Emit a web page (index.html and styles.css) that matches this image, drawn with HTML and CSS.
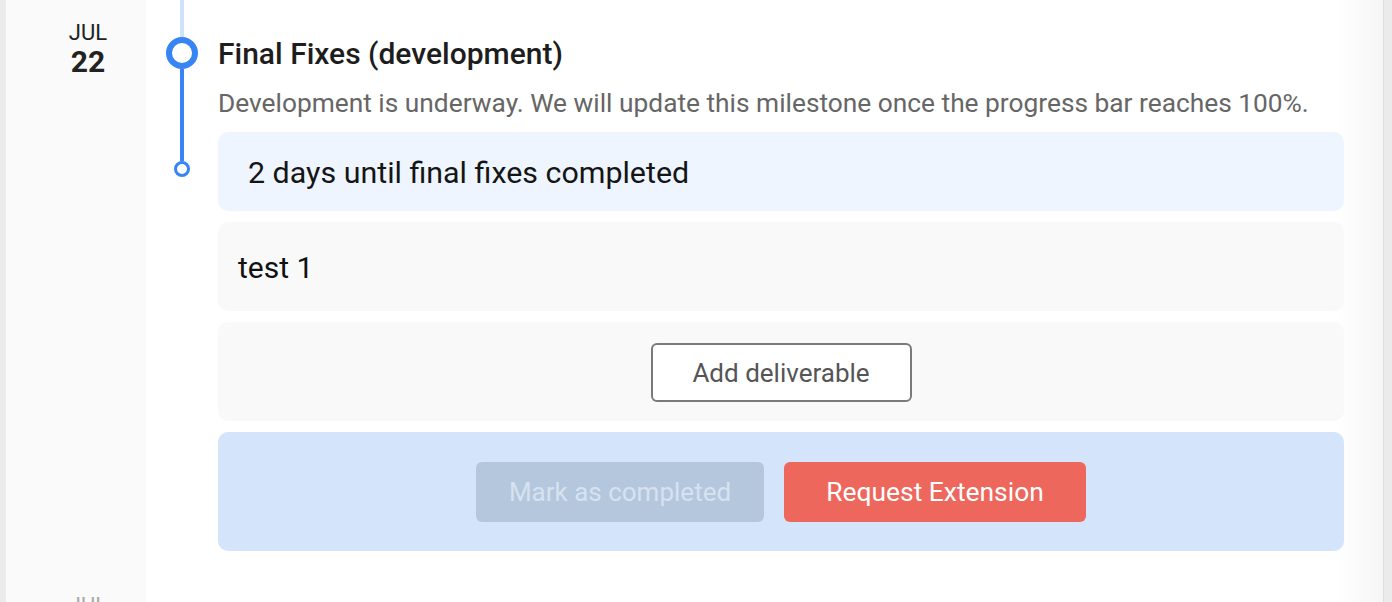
FILE: index.html
```html
<!DOCTYPE html>
<html>
<head>
<meta charset="utf-8">
<link rel="stylesheet" href="styles.css">
</head>
<body>
<div class="page">
  <div class="item">
    <div class="date">
      <div class="month">JUL</div>
      <div class="day">22</div>
    </div>
    <div class="rail">
      <div class="seg seg-top"></div>
      <div class="dot-big"></div>
      <div class="seg seg-mid"></div>
      <div class="dot-small"></div>
    </div>
    <div class="content">
      <h2 class="title">Final Fixes (development)</h2>
      <p class="desc">Development is underway. We will update this milestone once the progress bar reaches 100%.</p>
      <div class="box box-count">2 days until final fixes completed</div>
      <div class="box box-deliv">test 1</div>
      <div class="box box-add"><button class="btn-add">Add deliverable</button></div>
      <div class="box box-actions">
        <button class="btn btn-done">Mark as completed</button>
        <button class="btn btn-ext">Request Extension</button>
      </div>
    </div>
  </div>
  <div class="item item-next">
    <div class="date">
      <div class="month month-muted">JUL</div>
    </div>
    <div class="rail"></div>
    <div class="content"></div>
  </div>
</div>
</body>
</html>
```
FILE: styles.css
```css
* { box-sizing: border-box; }
html, body { margin: 0; padding: 0; }
body {
  background: #ebebeb;
  font-family: Roboto, "Liberation Sans", sans-serif;
  height: 602px;
  overflow: hidden;
}
.page {
  margin: 0 8px 0 6px;
  border-right: 1px solid #dedede;
  background: linear-gradient(to right, #fff calc(100% - 48px), #f6f6f6 100%);
  min-height: 602px;
}
.item {
  display: flex;
}
.date {
  width: 140px;
  flex: none;
  background: #fafafa;
  padding-top: 21px;
  display: flex;
  flex-direction: column;
  align-items: center;
  padding-left: 24px;
}
.month {
  font-size: 22px;
  line-height: 24px;
  color: #222;
}
.day {
  font-size: 30px;
  line-height: 34px;
  font-weight: 700;
  color: #222;
}
.month-muted { color: #aaa; }
.rail {
  width: 72px;
  flex: none;
  display: flex;
  flex-direction: column;
  align-items: center;
}
.seg { width: 4px; }
.seg-top { height: 37px; background: #cfe2fb; }
.seg-mid { height: 92px; background: #3784f5; }
.dot-big {
  width: 32px;
  height: 32px;
  border-radius: 50%;
  border: 6px solid #3784f5;
  background: #fff;
}
.dot-small {
  width: 16px;
  height: 16px;
  border-radius: 50%;
  border: 3px solid #3784f5;
  background: #fff;
}
.content {
  flex: 1;
  padding: 37px 39px 18px 0;
}
.title {
  margin: 0;
  font-size: 30px;
  line-height: 34px;
  font-weight: 500;
  color: #1d1d1d;
}
.desc {
  margin: 17px 0 14px;
  font-size: 26.3px;
  line-height: 30px;
  color: #666;
}
.box {
  border-radius: 10px;
  margin-bottom: 11px;
}
.box-count {
  background: #eef5fe;
  height: 79px;
  padding: 2px 30px 0;
  display: flex;
  align-items: center;
  font-size: 30.4px;
  color: #151515;
}
.box-deliv {
  background: #f9f9f9;
  height: 89px;
  padding: 2px 20px 0;
  display: flex;
  align-items: center;
  font-size: 30px;
  color: #111;
}
.box-add {
  background: #f9f9f9;
  height: 99px;
  display: flex;
  justify-content: center;
  padding-top: 21px;
}
.btn-add {
  width: 261px;
  height: 59px;
  background: #fff;
  border: 2px solid #7a7a7a;
  border-radius: 6px;
  font-family: inherit;
  font-size: 26px;
  color: #555;
}
.box-actions {
  background: #d3e4fb;
  height: 119px;
  margin-bottom: 0;
  display: flex;
  justify-content: center;
  align-items: center;
  gap: 20px;
}
.btn {
  height: 60px;
  border: none;
  border-radius: 6px;
  font-family: inherit;
  font-size: 26px;
}
.btn-done {
  width: 288px;
  background: #b5c7dd;
  color: #d6e2f0;
}
.btn-ext {
  width: 302px;
  background: #ee675c;
  color: #fff;
  font-size: 26.4px;
}
.item-next .date { padding-top: 25px; }
```
